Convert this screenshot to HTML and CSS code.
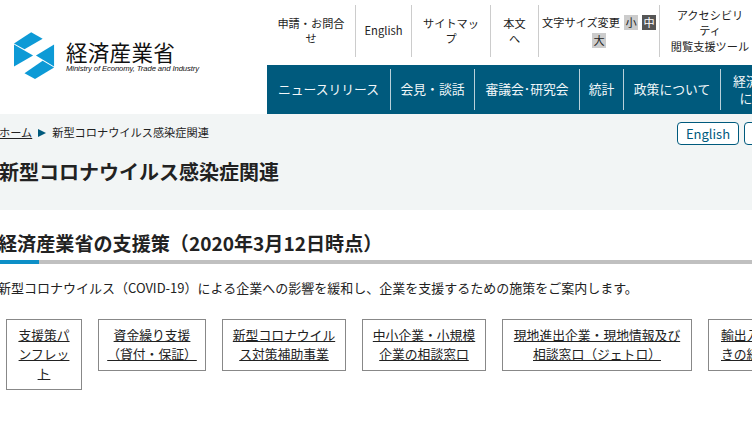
FILE: index.html
```html
<!DOCTYPE html>
<html lang="ja">
<head>
<meta charset="utf-8">
<title>新型コロナウイルス感染症関連</title>
<link rel="stylesheet" href="styles.css">
</head>
<body>
<header class="header">
  <a class="logo" href="#">
    <svg class="logo-mark" viewBox="0 0 44 50" aria-hidden="true">
      <polygon points="0,12 18,0 30,7 11,18"/>
      <polygon points="0,13 20,24.5 0,36"/>
      <polygon points="42,13 42,36 23,24.5"/>
      <polygon points="11,43 30,30 42,37 22,49"/>
    </svg>
    <span class="logo-text">
      <span class="logo-ja">経済産業省</span>
      <span class="logo-en">Ministry of Economy, Trade and Industry</span>
    </span>
  </a>
  <div class="header-nav">
    <ul class="top-nav">
      <li class="top-item t1"><a href="#">申請・お問合<br>せ</a></li>
      <li class="top-item t2"><a href="#">English</a></li>
      <li class="top-item t3"><a href="#">サイトマッ<br>プ</a></li>
      <li class="top-item t4"><a href="#">本文<br>へ</a></li>
      <li class="top-item t5"><span>文字サイズ変更<span class="size">小</span><span class="size current">中</span><br><span class="size lone">大</span></span></li>
      <li class="top-item t6"><a href="#">アクセシビリ<br>ティ<br>閲覧支援ツール</a></li>
    </ul>
    <ul class="main-nav">
      <li class="main-item m1"><a href="#">ニュースリリース</a></li>
      <li class="main-item m2"><a href="#">会見・談話</a></li>
      <li class="main-item m3"><a href="#">審議会･研究会</a></li>
      <li class="main-item m4"><a href="#">統計</a></li>
      <li class="main-item m5"><a href="#">政策について</a></li>
      <li class="main-item m6"><a href="#">経済産業省<br>について</a></li>
    </ul>
  </div>
</header>
<section class="band">
  <div class="crumb-row">
    <p class="crumbs"><a href="#">ホーム</a><span class="arrow"></span>新型コロナウイルス感染症関連</p>
    <div class="langs"><a class="lang" href="#">English</a><a class="lang lang-next" href="#">Japanese</a></div>
  </div>
  <h1 class="title">新型コロナウイルス感染症関連</h1>
</section>
<main class="content">
  <h2 class="heading">経済産業省の支援策（2020年3月12日時点）</h2>
  <div class="rule"><span class="rule-accent"></span></div>
  <p class="lead">新型コロナウイルス（COVID-19）による企業への影響を緩和し、企業を支援するための施策をご案内します。</p>
  <ul class="links">
    <li class="link b1"><a href="#">支援策パ<br>ンフレッ<br>ト</a></li>
    <li class="link b2"><a href="#">資金繰り支援<br>（貸付・保証）</a></li>
    <li class="link b3"><a href="#">新型コロナウイル<br>ス対策補助事業</a></li>
    <li class="link b4"><a href="#">中小企業・小規模<br>企業の相談窓口</a></li>
    <li class="link b5"><a href="#">現地進出企業・現地情報及び<br>相談窓口（ジェトロ）</a></li>
    <li class="link b6"><a href="#">輸出入手続<br>きの緩和等</a></li>
  </ul>
</main>
</body>
</html>
```
FILE: styles.css
```css
* { box-sizing: border-box; }
html, body { margin: 0; padding: 0; width: 752px; height: 424px; overflow: hidden; background: #fff; }
body { font-family: "Noto Sans CJK JP", "Noto Sans", sans-serif; color: #222; font-size: 12.8px; }
ul { list-style: none; margin: 0; padding: 0; }
a { color: inherit; text-decoration: none; }

.header { display: flex; height: 114px; width: 900px; }
.logo { flex: 0 0 267px; display: flex; align-items: flex-start; padding: 32px 0 0 14px; color: #111; }
.logo-mark { width: 42px; height: 48px; fill: #0d9ad6; flex: none; }
.logo-text { display: flex; flex-direction: column; margin: 8px 0 0 10px; }
.logo-ja { font-size: 21.5px; line-height: 24px; letter-spacing: .3px; }
.logo-en { font-family: "Liberation Sans", sans-serif; font-style: italic; font-size: 7.7px; line-height: 10px; white-space: nowrap; letter-spacing: -.1px; }

.header-nav { flex: 1; display: flex; flex-direction: column; }
.top-nav { display: flex; height: 65px; padding: 5px 0 8px; font-size: 11.2px; line-height: 15.5px; }
.top-item { display: flex; align-items: center; justify-content: center; text-align: center; border-right: 1px solid #ccc; flex: none; }
.t1 { width: 89px; }
.t2 { width: 56px; }
.t3 { width: 79px; }
.t4 { width: 48px; }
.t5 { width: 121px; line-height: 18px; white-space: nowrap; }
.t6 { width: 100px; border-right: 0; }
.size { display: inline-block; width: 14px; height: 15px; line-height: 15px; background: #ccc; color: #222; text-align: center; font-size: 11.2px; margin-left: 4px; }
.size.current { background: #555; color: #fff; }
.size.lone { margin-left: 0; }

.main-nav { display: flex; height: 49px; background: #005a7d; color: #f2f7f9; font-size: 12.8px; line-height: 17px; padding: 4px 0; }
.main-item { display: flex; align-items: center; justify-content: center; text-align: center; border-right: 1px solid #b9d0da; flex: none; padding-bottom: 2px; }
.m1 { width: 124px; }
.m2 { width: 84px; }
.m3 { width: 105px; }
.m4 { width: 44px; }
.m5 { width: 97px; }
.m6 { width: 88px; border-right: 0; }

.band { background: #f2f5f5; height: 96px; padding-top: 8px; }
.crumb-row { display: flex; justify-content: space-between; align-items: flex-start; margin-left: -1px; width: 827px; height: 24px; }
.crumbs { margin: 0; font-size: 11.2px; line-height: 20px; }
.crumbs a { text-decoration: underline; }
.arrow { display: inline-block; width: 0; height: 0; border-left: 8px solid #005a7d; border-top: 4px solid transparent; border-bottom: 4px solid transparent; margin: 0 6px; }
.langs { display: flex; gap: 5px; }
.lang { border: 1px solid #005a7d; border-radius: 4px; height: 23px; line-height: 21px; font-size: 13px; color: #005a7d; background: #fff; width: 62px; text-align: center; }
.lang-next { width: 82px; }
.title { margin: 11px 0 0 -1px; font-size: 20px; line-height: 30px; font-weight: 700; color: #222; }

.content { margin-left: -2px; width: 900px; }
.heading { margin: 19px 0 0; padding-bottom: 3px; font-size: 19.1px; line-height: 28px; font-weight: 700; color: #222; }
.rule { height: 4px; width: 756px; background: #c0c0c0; }
.rule-accent { display: block; width: 41px; height: 4px; background: #0d8fc7; }
.lead { margin: 15px 0 0; font-size: 13px; line-height: 18px; }
.links { display: flex; align-items: flex-start; gap: 16px; margin: 22px 0 0 8px; font-size: 12.8px; line-height: 19px; }
.link { flex: none; border: 1px solid #888; padding: 5px 8px 7px; text-align: center; white-space: nowrap; }
.link a { text-decoration: underline; }
.b1 { width: 76px; }
.b2 { width: 108px; }
.b3 { width: 124px; }
.b4 { width: 124px; }
.b5 { width: 190px; }
.b6 { width: 90px; }
```
